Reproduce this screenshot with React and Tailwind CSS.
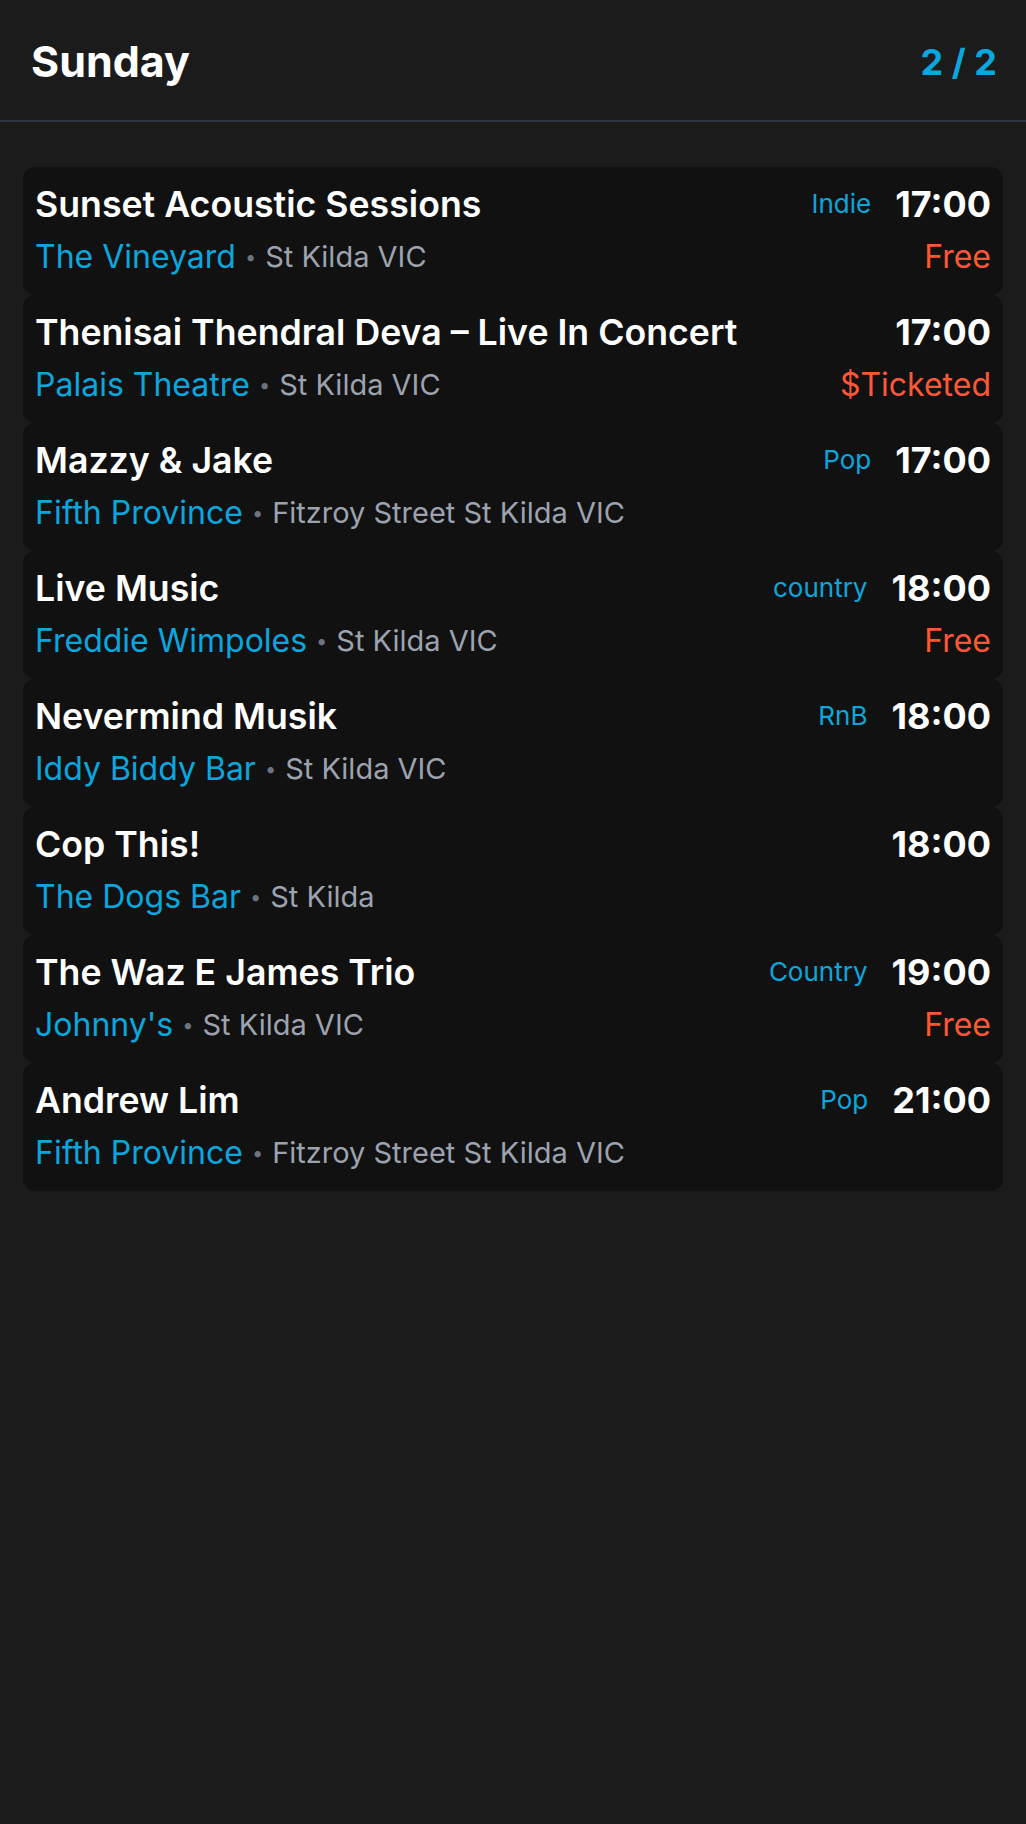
const events = [
  { title: "Sunset Acoustic Sessions", venue: "The Vineyard", place: "St Kilda VIC", genre: "Indie", time: "17:00", price: "Free" },
  { title: "Thenisai Thendral Deva – Live In Concert", venue: "Palais Theatre", place: "St Kilda VIC", genre: "", time: "17:00", price: "$Ticketed" },
  { title: "Mazzy & Jake", venue: "Fifth Province", place: "Fitzroy Street St Kilda VIC", genre: "Pop", time: "17:00", price: "" },
  { title: "Live Music", venue: "Freddie Wimpoles", place: "St Kilda VIC", genre: "country", time: "18:00", price: "Free" },
  { title: "Nevermind Musik", venue: "Iddy Biddy Bar", place: "St Kilda VIC", genre: "RnB", time: "18:00", price: "" },
  { title: "Cop This!", venue: "The Dogs Bar", place: "St Kilda", genre: "", time: "18:00", price: "" },
  { title: "The Waz E James Trio", venue: "Johnny's", place: "St Kilda VIC", genre: "Country", time: "19:00", price: "Free" },
  { title: "Andrew Lim", venue: "Fifth Province", place: "Fitzroy Street St Kilda VIC", genre: "Pop", time: "21:00", price: "" },
]

function EventCard({ ev }) {
  return (
    <div className="h-[128px] rounded-[12px] bg-[#111111] px-[12px] pt-[15px]">
      <div className="flex h-[44px] items-center justify-between">
        <div className="truncate text-[35.7px] font-semibold leading-[44px] text-white">{ev.title}</div>
        <div className="flex shrink-0 items-center gap-[24px]">
          {ev.genre && <span className="text-[26px] leading-[32px] text-[#0aa7df]">{ev.genre}</span>}
          <span className="text-[36px] font-bold leading-[44px] text-white">{ev.time}</span>
        </div>
      </div>
      <div className="mt-[11px] flex h-[40px] items-center justify-between">
        <div className="flex items-center whitespace-nowrap leading-[40px]">
          <span className="text-[32px] text-[#0aa7df]">{ev.venue}</span>
          <span className="mx-[9px] text-[20px] text-[#6b7280]">•</span>
          <span className="text-[29px] text-[#9ca3af]">{ev.place}</span>
        </div>
        {ev.price && <span className="text-[32px] leading-[40px] text-[#ff5736]">{ev.price}</span>}
      </div>
    </div>
  )
}

export default function App() {
  return (
    <div className="min-h-[1824px] bg-[#1b1b1b] font-['Inter',sans-serif]">
      <div className="flex h-[122px] items-center justify-between border-b-2 border-[#2e3644] pl-[31px] pr-[29px] pt-[3px]">
        <h1 className="text-[43px] font-bold text-white">Sunday</h1>
        <span className="text-[36px] font-bold text-[#0aa7df]">2 / 2</span>
      </div>
      <div className="flex flex-col px-[23px] pt-[45px]">
        {events.map((ev, i) => (
          <EventCard key={i} ev={ev} />
        ))}
      </div>
    </div>
  )
}
